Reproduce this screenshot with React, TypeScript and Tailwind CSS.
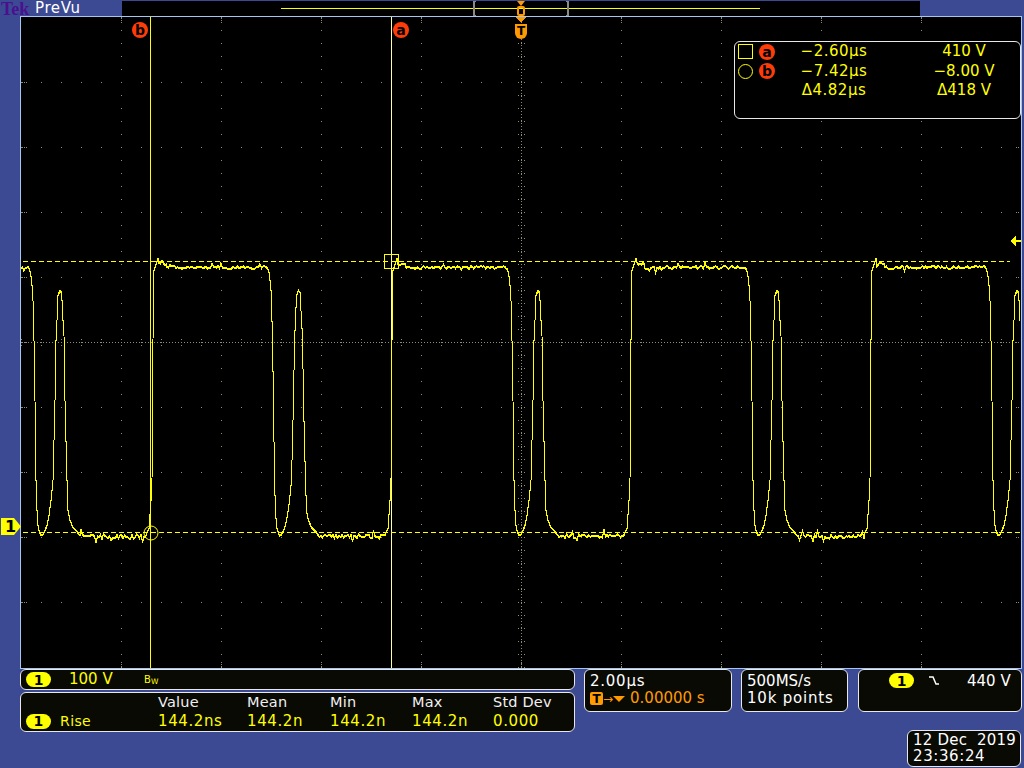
const FALLS = [34, 272.5, 512, 751, 991];
const RISES = [153, 392, 631, 871];

// pulse shape around each falling edge, x is relative to the edge
const PULSE: [number, number][] = [
  [-5, 268], [-3.5, 272], [-2.5, 280], [-1.5, 290], [-1, 300], [0, 340], [1, 400], [2, 480],
  [3, 510], [4, 525], [5, 530], [7, 535], [9, 534], [11, 530], [13, 525], [15, 515], [17, 500],
  [19, 480], [21, 400], [22, 340], [23, 320], [24, 295], [26, 290], [27.5, 292], [28, 300],
  [29, 320], [30, 335], [31, 400], [33, 480], [34, 510], [36, 520], [39, 527], [43, 531], [46, 535],
];

const RISE: [number, number][] = [
  [-6, 532], [-4, 528], [-2, 500], [-1, 480], [0, 340], [0.5, 285], [1, 270], [3, 264], [5, 258],
];

function buildTrace() {
  let seed = 41;
  const rnd = () => {
    seed = (seed * 1103515 + 12345) % 2147483648;
    return seed / 2147483648;
  };
  const pts: string[] = [];
  const add = (x: number, y: number) => pts.push(`${x.toFixed(1)},${y.toFixed(1)}`);
  const noise = (from: number, to: number, base: number, amp: number) => {
    for (let x = from; x < to; x += 1.5) {
      const spike = rnd() > 0.9 ? (rnd() - 0.5) * amp * 3 : 0;
      add(x, base + (rnd() - 0.5) * amp + spike);
    }
  };
  noise(21, 29, 267, 3);
  FALLS.forEach((f, i) => {
    PULSE.forEach(([dx, y]) => {
      if (f + dx < 1021) add(f + dx, y);
    });
    const r = RISES[i];
    if (r === undefined) return;
    noise(f + 47, r - 6, 536, 4);
    RISE.forEach(([dx, y]) => add(r + dx, y));
    noise(r + 6, r + 14, 263, 3);
    noise(r + 14, FALLS[i + 1] - 5, 267, 3);
  });
  return pts.join(" ");
}

function buildDots() {
  let d = "";
  const dot = (x: number, y: number) => {
    d += `M${x} ${y}h1v1h-1z`;
  };
  for (let i = 1; i < 10; i++) {
    const gx = 21 + i * 100;
    for (let y = 17; y <= 667; y += 13) dot(gx, y);
    [18, 20, 22, 662, 664, 666].forEach((y) => dot(gx, y));
  }
  for (let i = 1; i < 10; i++) {
    const gy = 17 + i * 65;
    for (let x = 21; x <= 1021; x += 20) dot(x, gy);
    [22, 24, 26, 1016, 1018].forEach((x) => dot(x, gy));
  }
  // centre graticule lines
  for (let y = 18; y < 668; y += 3) dot(521, y);
  for (let x = 22; x < 1021; x += 3) dot(x, 342);
  for (let y = 17; y <= 667; y += 13) {
    dot(518, y);
    dot(524, y);
  }
  for (let x = 21; x <= 1021; x += 20) {
    dot(x, 339);
    dot(x, 345);
  }
  return d;
}

const trace = buildTrace();
const dots = buildDots();

function CursorTag({ label, className }: { label: string; className?: string }) {
  return (
    <span
      className={`flex h-4 w-4 items-center justify-center rounded-full bg-[#ff3c08] text-[14px] leading-none font-bold text-black ${className ?? ""}`}
    >
      {label}
    </span>
  );
}

function ChannelChip() {
  return (
    <span className="flex h-[15px] w-[25px] shrink-0 items-center justify-center rounded-full bg-[#ffff00] text-[14px] leading-none font-bold text-black">
      1
    </span>
  );
}

function Readout() {
  const rows = [
    ["\u22122.60\u00b5s", "410 V"],
    ["\u22127.42\u00b5s", "\u22128.00 V"],
    ["\u03944.82\u00b5s", "\u0394418 V"],
  ];
  return (
    <div className="absolute top-[24px] left-[713px] h-[78px] w-[287px] rounded-[6px] border border-[#e8e8e8] bg-black pl-[3px] text-[15px] leading-[19.5px] text-[#ffff00]">
      <div className="grid grid-cols-[43px_106px_130px]">
        <div className="flex items-center gap-[6px]">
          <span className="h-[15px] w-[15px] border border-[#ffff00]" />
          <CursorTag label="a" />
        </div>
        <span className="text-center tracking-[0.5px]">{rows[0][0]}</span>
        <span className="pl-[24px] text-center">{rows[0][1]}</span>
        <div className="flex items-center gap-[6px]">
          <span className="h-[15px] w-[15px] rounded-full border border-[#ffff00]" />
          <CursorTag label="b" />
        </div>
        <span className="text-center tracking-[0.5px]">{rows[1][0]}</span>
        <span className="pl-[24px] text-center">{rows[1][1]}</span>
        <span />
        <span className="text-center tracking-[0.5px]">{rows[2][0]}</span>
        <span className="pl-[24px] text-center">{rows[2][1]}</span>
      </div>
    </div>
  );
}

function Screen() {
  return (
    <div className="relative ml-5 h-[653px] w-[1002px] border border-[#a4c6f2] bg-black">
      <svg viewBox="21 17 1000 651" className="block h-[651px] w-[1000px]" shapeRendering="crispEdges">
        <path d={dots} fill="#8e8e72" />
        <path d="M150.5 17V668" stroke="#ffff00" strokeWidth="1" />
        <path d="M391.5 17V668" stroke="#ffffa0" strokeWidth="1" />
        <path d="M23 261.5H1010M23 532.5H1021" stroke="#ffff00" strokeWidth="1" strokeDasharray="5 3" />
        <polyline points={trace} fill="none" stroke="#ffff00" strokeWidth="1" />
        <polyline points={trace} fill="none" stroke="#ffff00" strokeWidth="1" transform="translate(0 1)" />
        <rect x="384.5" y="254.5" width="14" height="14" fill="none" stroke="#ffff00" />
        <circle cx="151" cy="533" r="7" fill="none" stroke="#ffff00" shapeRendering="auto" />
        <path d="M1010 241l6-5v4h5v2h-5v4z" fill="#ffff00" />
        <path d="M516 17h10l-5 6z" fill="#ff9a00" />
      </svg>

      <CursorTag label="b" className="absolute top-[5px] left-[111px]" />
      <CursorTag label="a" className="absolute top-[5px] left-[372px]" />

      <span className="absolute top-[7px] left-[494px] flex h-[15px] w-[12px] items-start justify-center rounded-b-[6px] bg-[#ff9a00] text-[12px] leading-[14px] font-bold text-black">
        T
      </span>

      <Readout />

      <span className="absolute top-[501px] left-[-20px] flex h-[17px] w-[20px] items-center bg-[#ffff00] pl-[4px] text-[16px] leading-none font-bold text-black [clip-path:polygon(0_0,65%_0,100%_50%,65%_100%,0_100%)]">
        1
      </span>
    </div>
  );
}

function TopBar() {
  return (
    <div className="flex h-4 bg-[#3b4a93] pt-[1px]">
      <div className="flex h-[15px] w-[122px] items-center">
        <span className="-mt-px w-[35px] self-start pl-[1px] font-['Liberation_Serif',serif] text-[18px] leading-[18px] font-bold text-[#4a108e]">
          Tek
        </span>
        <span className="text-[15px] leading-[15px] tracking-[0.6px] text-white">PreVu</span>
      </div>
      <div className="relative h-[15px] w-[798px] bg-black">
        <div className="absolute top-[7px] left-[159px] h-px w-[479px] bg-[#ffff00]" />
        <div className="absolute top-[0px] left-[351px] h-[15px] w-[3px] border-y border-l-2 border-[#8a8a8a]" />
        <div className="absolute top-[0px] left-[444px] h-[15px] w-[3px] border-y border-r-2 border-[#8a8a8a]" />
        <div className="absolute top-0 left-[395px] h-0 w-0 border-x-[4px] border-t-[5px] border-x-transparent border-t-[#ff9a00]" />
        <div className="absolute top-[5px] left-[395px] h-[10px] w-[8px] rounded-[2px] border-2 border-[#ff9a00]" />
      </div>
    </div>
  );
}

function Measurements() {
  return (
    <div className="grid h-[40px] grid-cols-[137px_89px_83px_82px_81px_1fr] grid-rows-[19px_18px] rounded-[6px] border border-[#e8e8e8] bg-[#0a0a04] text-[15px] leading-[18px]">
      <span />
      {["Value", "Mean", "Min", "Max", "Std Dev"].map((h) => (
        <span key={h} className="text-[14.5px] tracking-[0.2px] whitespace-nowrap text-[#f0f0f0]">
          {h}
        </span>
      ))}
      <span className="flex items-center gap-[9px] pl-[5px] text-[14px] tracking-[0.4px] text-[#ffff00]">
        <ChannelChip />
        Rise
      </span>
      {["144.2ns", "144.2n", "144.2n", "144.2n", "0.000"].map((v, i) => (
        <span key={i} className="tracking-[0.6px] text-[#ffff00]">
          {v}
        </span>
      ))}
    </div>
  );
}

export default function App() {
  return (
    <div className="h-[768px] w-[1024px] overflow-hidden bg-[#3b4a93] font-['DejaVu_Sans',sans-serif]">
      <TopBar />
      <Screen />
      <div className="flex gap-[9px] pl-5">
        <div className="flex w-[555px] flex-col gap-[2px]">
          <div className="flex h-[21px] items-center rounded-[6px] border border-[#e8e8e8] bg-[#0a0a04] pl-[5px] text-[15px] text-[#ffff00]">
            <ChannelChip />
            <span className="ml-[18px] w-[75px]">100 V</span>
            <span className="text-[10px] leading-none">
              B<sub>W</sub>
            </span>
          </div>
          <Measurements />
        </div>
        <div className="flex flex-col">
          <div className="flex text-[15px] leading-[17px]">
            <div className="h-[43px] w-[148px] rounded-[6px] border border-[#e8e8e8] bg-[#0a0a04] pt-[3px] pl-[5px] text-white">
              <div className="tracking-[0.75px]">2.00µs</div>
              <div className="flex items-center text-[#ff9a00]">
                <span className="flex h-[13px] w-[13px] items-center justify-center rounded-[2px] bg-[#ff9a00] text-[12px] leading-none font-bold text-black">
                  T
                </span>
                <span className="text-[12px] leading-none">→</span>
                <span className="mr-[5px] h-0 w-0 border-x-[6px] border-t-[6px] border-x-transparent border-t-[#ff9a00]" />
                0.00000 s
              </div>
            </div>
            <div className="ml-[9px] h-[43px] w-[107px] rounded-[6px] border border-[#e8e8e8] bg-[#0a0a04] pt-[3px] pl-[5px] text-white">
              <div>500MS/s</div>
              <div className="tracking-[0.8px]">10k points</div>
            </div>
            <div className="ml-[10px] flex h-[43px] w-[164px] items-start rounded-[6px] border border-[#e8e8e8] bg-[#0a0a04] pt-[3px] pl-[30px] text-white">
              <ChannelChip />
              <svg viewBox="0 0 12 12" className="mt-[2px] ml-[14px] h-3 w-3" fill="none" stroke="#ffffff" strokeWidth="1.5">
                <path d="M1 2h4l3 7h3" />
              </svg>
              <span className="ml-[27px]">440 V</span>
            </div>
          </div>
          <div className="mt-[18px] mr-[1px] h-[37px] w-[114px] self-end rounded-[6px] border border-[#e8e8e8] bg-[#0a0a04] pt-[1px] pl-[5px] text-[15px] leading-[16px] whitespace-pre text-white">
            <div className="tracking-[0.2px]">12 Dec  2019</div>
            <div className="tracking-[0.6px]">23:36:24</div>
          </div>
        </div>
      </div>
    </div>
  );
}
